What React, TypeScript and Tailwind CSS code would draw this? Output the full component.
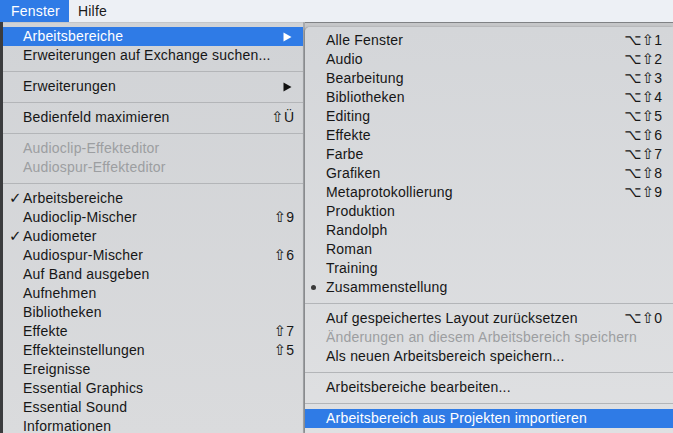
import React from "react";

type Item =
  | { kind: "sep" }
  | {
      kind: "item";
      label: string;
      shortcut?: string;
      disabled?: boolean;
      check?: boolean;
      dot?: boolean;
      arrow?: boolean;
      active?: boolean;
    };

const leftItems: Item[] = [
  { kind: "item", label: "Arbeitsbereiche", arrow: true, active: true },
  { kind: "item", label: "Erweiterungen auf Exchange suchen..." },
  { kind: "sep" },
  { kind: "item", label: "Erweiterungen", arrow: true },
  { kind: "sep" },
  { kind: "item", label: "Bedienfeld maximieren", shortcut: "⇧Ü" },
  { kind: "sep" },
  { kind: "item", label: "Audioclip-Effekteditor", disabled: true },
  { kind: "item", label: "Audiospur-Effekteditor", disabled: true },
  { kind: "sep" },
  { kind: "item", label: "Arbeitsbereiche", check: true },
  { kind: "item", label: "Audioclip-Mischer", shortcut: "⇧9" },
  { kind: "item", label: "Audiometer", check: true },
  { kind: "item", label: "Audiospur-Mischer", shortcut: "⇧6" },
  { kind: "item", label: "Auf Band ausgeben" },
  { kind: "item", label: "Aufnehmen" },
  { kind: "item", label: "Bibliotheken" },
  { kind: "item", label: "Effekte", shortcut: "⇧7" },
  { kind: "item", label: "Effekteinstellungen", shortcut: "⇧5" },
  { kind: "item", label: "Ereignisse" },
  { kind: "item", label: "Essential Graphics" },
  { kind: "item", label: "Essential Sound" },
  { kind: "item", label: "Informationen" },
];

const rightItems: Item[] = [
  { kind: "item", label: "Alle Fenster", shortcut: "⌥⇧1" },
  { kind: "item", label: "Audio", shortcut: "⌥⇧2" },
  { kind: "item", label: "Bearbeitung", shortcut: "⌥⇧3" },
  { kind: "item", label: "Bibliotheken", shortcut: "⌥⇧4" },
  { kind: "item", label: "Editing", shortcut: "⌥⇧5" },
  { kind: "item", label: "Effekte", shortcut: "⌥⇧6" },
  { kind: "item", label: "Farbe", shortcut: "⌥⇧7" },
  { kind: "item", label: "Grafiken", shortcut: "⌥⇧8" },
  { kind: "item", label: "Metaprotokollierung", shortcut: "⌥⇧9" },
  { kind: "item", label: "Produktion" },
  { kind: "item", label: "Randolph" },
  { kind: "item", label: "Roman" },
  { kind: "item", label: "Training" },
  { kind: "item", label: "Zusammenstellung", dot: true },
  { kind: "sep" },
  { kind: "item", label: "Auf gespeichertes Layout zurücksetzen", shortcut: "⌥⇧0" },
  { kind: "item", label: "Änderungen an diesem Arbeitsbereich speichern", disabled: true },
  { kind: "item", label: "Als neuen Arbeitsbereich speichern..." },
  { kind: "sep" },
  { kind: "item", label: "Arbeitsbereiche bearbeiten..." },
  { kind: "sep" },
  { kind: "item", label: "Arbeitsbereich aus Projekten importieren", active: true },
];

function Arrow({ white }: { white?: boolean }) {
  return (
    <svg width="9" height="10" viewBox="0 0 9 10" className="shrink-0">
      <path d="M0.5 0.5 L8.5 5 L0.5 9.5 Z" fill={white ? "#ffffff" : "#111111"} />
    </svg>
  );
}

function Shortcut({ text }: { text: string }) {
  const chars = Array.from(text);
  return (
    <span className="flex items-center whitespace-nowrap">
      {chars.map((c, i) =>
        c === "⌥" || c === "⇧" ? (
          <span
            key={i}
            className="text-[15px] leading-[19px]"
            style={{ fontFamily: '"DejaVu Sans", sans-serif' }}
          >
            {c}
          </span>
        ) : (
          <span key={i}>{c}</span>
        )
      )}
    </span>
  );
}

function MenuList({ items, left }: { items: Item[]; left: boolean }) {
  return (
    <>
      {items.map((it, i) => {
        if (it.kind === "sep") {
          return (
            <div key={i} className="h-[12px] flex items-center">
              <div className="h-px w-full bg-[#b3b5b8]" />
            </div>
          );
        }
        const color = it.active
          ? "text-white bg-[#2f7be6]"
          : it.disabled
          ? "text-[#9c9ea1]"
          : "text-[#161616]";
        return (
          <div
            key={i}
            className={`relative h-[19px] flex items-center ${left ? "pl-[20px] pr-[9px]" : "pl-[21px] pr-[11px]"} ${color}`}
          >
            {it.check && (
              <span
                className="absolute left-[6px] top-0 h-[19px] flex items-center text-[15px] font-bold"
                style={{ fontFamily: '"DejaVu Sans", sans-serif' }}
              >
                ✓
              </span>
            )}
            {it.dot && (
              <span className="absolute left-[6px] top-[7px] w-[5px] h-[5px] rounded-full bg-[#3a3a3a]" />
            )}
            <span className="flex-1 whitespace-nowrap tracking-[0.2px]">{it.label}</span>
            {it.shortcut && <Shortcut text={it.shortcut} />}
            {it.arrow && (
              <span className="pr-[2px]">
                <Arrow white={it.active} />
              </span>
            )}
          </div>
        );
      })}
    </>
  );
}

export default function App() {
  return (
    <div
      className="w-[673px] h-[433px] overflow-hidden flex flex-col bg-[#d5d7d9] text-[14px] leading-[19px]"
      style={{ fontFamily: '"Liberation Sans", "DejaVu Sans", Arial, sans-serif' }}
    >
      {/* menu bar */}
      <div className="h-[22px] shrink-0 flex items-stretch bg-[#edf0f5] text-[#1a1a1a] tracking-[0.2px]">
        <div className="w-[69px] bg-[#2f7be6] text-white flex items-center pl-[11px]">Fenster</div>
        <div className="flex items-center pl-[9px]">Hilfe</div>
      </div>
      <div className="flex-1 flex min-h-0">
        <div className="w-[3px] bg-[#3b3c3e] shrink-0" />
        {/* left menu */}
        <div className="w-[300px] shrink-0 pt-[4px] bg-gradient-to-b from-[#d1d3d6] to-[#dadbdd] border-t border-[#c4c6c9]">
          <MenuList items={leftItems} left />
        </div>
        <div className="w-[2px] shrink-0 bg-[#a9abae]" />
        {/* right area */}
        <div className="flex-1 flex flex-col bg-[#c6c7c9] border-t border-[#808285]">
          <div className="h-[4px] shrink-0" />
          <div className="flex-1 rounded-tl-[5px] pt-[4px] bg-gradient-to-b from-[#d4d6d9] to-[#dfe0e2] shadow-[-1px_0_2px_rgba(0,0,0,0.25)]">
            <MenuList items={rightItems} left={false} />
          </div>
        </div>
      </div>
    </div>
  );
}
